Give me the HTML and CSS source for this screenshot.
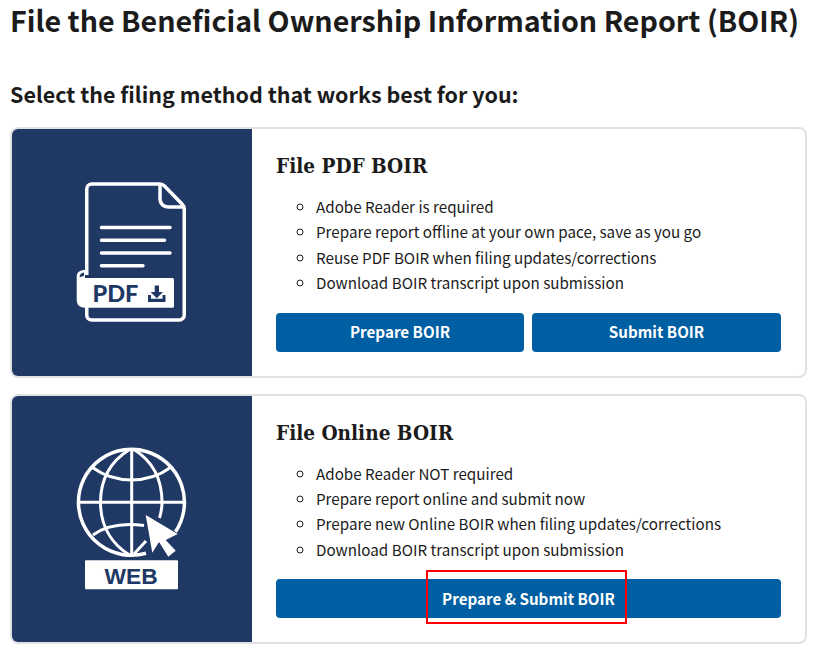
FILE: index.html
```html
<!DOCTYPE html>
<html lang="en">
<head>
<meta charset="utf-8">
<title>File the BOIR</title>
<link rel="stylesheet" href="styles.css">
</head>
<body>
<main class="page">
  <h1 class="title">File the Beneficial Ownership Information Report (BOIR)</h1>
  <h2 class="subtitle">Select the filing method that works best for you:</h2>

  <section class="card">
    <div class="card-media">
      <svg class="icon" width="240" height="247" viewBox="12 129 240 247" aria-hidden="true">
        <path class="line" d="M86.750 275V189a5 5 0 0 1 5-5H160c2 0 3 .5 4.500 2L182 204c1.500 1.500 2.250 3 2.250 5V315a5 5 0 0 1-5 5H91.750a5 5 0 0 1-5-5V305"/>
        <path class="line" d="M160 184V199a8 8 0 0 0 8 8H184"/>
        <path class="line round" d="M101.500 227.500H170M101.500 240.300H164.500M101.500 253H170M101.500 265.700H143"/>
        <path class="fill" d="M85 270C80 270 76.700 272 76.700 277V300C76.700 305 80 307.700 85 307.700H172.500a1.500 1.500 0 0 0 1.500-1.500V279.500a1.500 1.500 0 0 0-1.500-1.500H85z"/>
        <path class="ink" d="M84 272.500C81 272.700 79.500 274.500 79.500 277.500C81 276.500 82.500 276 84 276z"/>
        <text class="pdf" x="92.500" y="301.700">PDF</text>
        <path class="ink" d="M154.700 285.500H159v6.500h4l-6.200 6.200-6.200-6.200h4.100zM148 295h3v3.800h11.500V295h3v7H148z"/>
      </svg>
    </div>
    <div class="card-body">
      <h3 class="card-title">File PDF BOIR</h3>
      <ul class="points">
        <li>Adobe Reader is required</li>
        <li>Prepare report offline at your own pace, save as you go</li>
        <li>Reuse PDF BOIR when filing updates/corrections</li>
        <li>Download BOIR transcript upon submission</li>
      </ul>
      <div class="actions">
        <a class="btn">Prepare BOIR</a>
        <a class="btn">Submit BOIR</a>
      </div>
    </div>
  </section>

  <section class="card">
    <div class="card-media">
      <svg class="icon" width="240" height="246" viewBox="12 396 240 246" aria-hidden="true">
        <path class="line" d="M146 553.300A53 53 0 1 1 175.500 531.800"/>
        <path class="line thin" d="M131.700 449V554M80 502.300H183"/>
        <path class="line thin" d="M129.500 449.500C109.500 462 100.500 481 100.500 502.300C100.500 524 110 543 129.500 555"/>
        <path class="line thin" d="M134 449.500C154 462 162 481 162 502.300C162 508 161 513 159.500 518"/>
        <path class="line thin" d="M92.500 467.500C115 484 148 484 170.500 467.500"/>
        <path class="line thin" d="M93 535C106 525.500 124 523 144 525.500"/>
        <path class="line thin" d="M146 541L134 554"/>
        <path class="fill" d="M145.700 515L177.700 534L165.700 540L175.700 550.700L168.300 556.700L159 542L152.300 552.700z"/>
        <rect class="fill" x="85" y="560.300" width="93" height="29" rx="1"/>
        <text class="web" x="131" y="584">WEB</text>
      </svg>
    </div>
    <div class="card-body">
      <h3 class="card-title">File Online BOIR</h3>
      <ul class="points">
        <li>Adobe Reader NOT required</li>
        <li>Prepare report online and submit now</li>
        <li>Prepare new Online BOIR when filing updates/corrections</li>
        <li>Download BOIR transcript upon submission</li>
      </ul>
      <div class="actions">
        <a class="btn">Prepare &amp; Submit BOIR</a>
        <span class="highlight"></span>
      </div>
    </div>
  </section>
</main>
</body>
</html>
```

FILE: styles.css
```css
* { box-sizing: border-box; }
html, body { margin: 0; padding: 0; background: #fff; }
body {
  font-family: "Noto Sans CJK SC", "Noto Sans", sans-serif;
  color: #1b1b1b;
  overflow: hidden;
}
.page { width: 797px; margin-left: 10px; }
.title {
  margin: 0;
  font-size: 28.630px;
  line-height: 40px;
  font-weight: 700;
  white-space: nowrap;
}
.subtitle {
  margin: 34px 0 0;
  font-size: 21.500px;
  line-height: 40px;
  font-weight: 700;
}
.card {
  display: flex;
  height: 250.500px;
  margin-top: 13px;
  border: 2px solid #dfe1e2;
  border-radius: 8px;
  overflow: hidden;
}
.card + .card { margin-top: 16px; }
.card-media {
  flex: 0 0 240px;
  background: #203864;
  display: flex;
  align-items: center;
  justify-content: center;
}
.icon { display: block; }
.line { fill: none; stroke: #fff; stroke-width: 3.500; stroke-linejoin: round; }
.round { stroke-linecap: round; }
.thin { stroke-width: 3; }
.fill { fill: #fff; }
.ink { fill: #203864; }
.pdf, .web { fill: #203864; font-weight: 700; }
.pdf { font-family: "Lato", sans-serif; font-size: 23.500px; font-weight: 900; }
.web { font-family: "Liberation Sans", sans-serif; font-size: 22.800px; text-anchor: middle; }
.card-body { flex: 1; padding: 21px 24px 0; min-width: 0; }
.card-title {
  margin: 0;
  font-family: "DejaVu Serif Condensed", "DejaVu Serif", serif;
  font-size: 20.600px;
  line-height: 32px;
  font-weight: 700;
}
.points {
  list-style: circle;
  margin: 12px 0 0;
  padding-left: 40px;
  font-size: 15.200px;
  line-height: 25.400px;
}
.actions { position: relative; display: grid; grid-auto-flow: column; grid-template-columns: 248px; grid-auto-columns: 1fr; gap: 8px; margin-top: 17px; }
.actions:has(.highlight) { grid-template-columns: 1fr; }
.btn {
  height: 39px;
  padding-bottom: 2px;
  display: flex;
  align-items: center;
  justify-content: center;
  background: #005ea2;
  color: #fff;
  border-radius: 4px;
  font-size: 15.200px;
  font-weight: 700;
}
.highlight {
  position: absolute;
  left: 150px;
  top: -9px;
  width: 201px;
  height: 54px;
  border: 2px solid #f00;
}
```
